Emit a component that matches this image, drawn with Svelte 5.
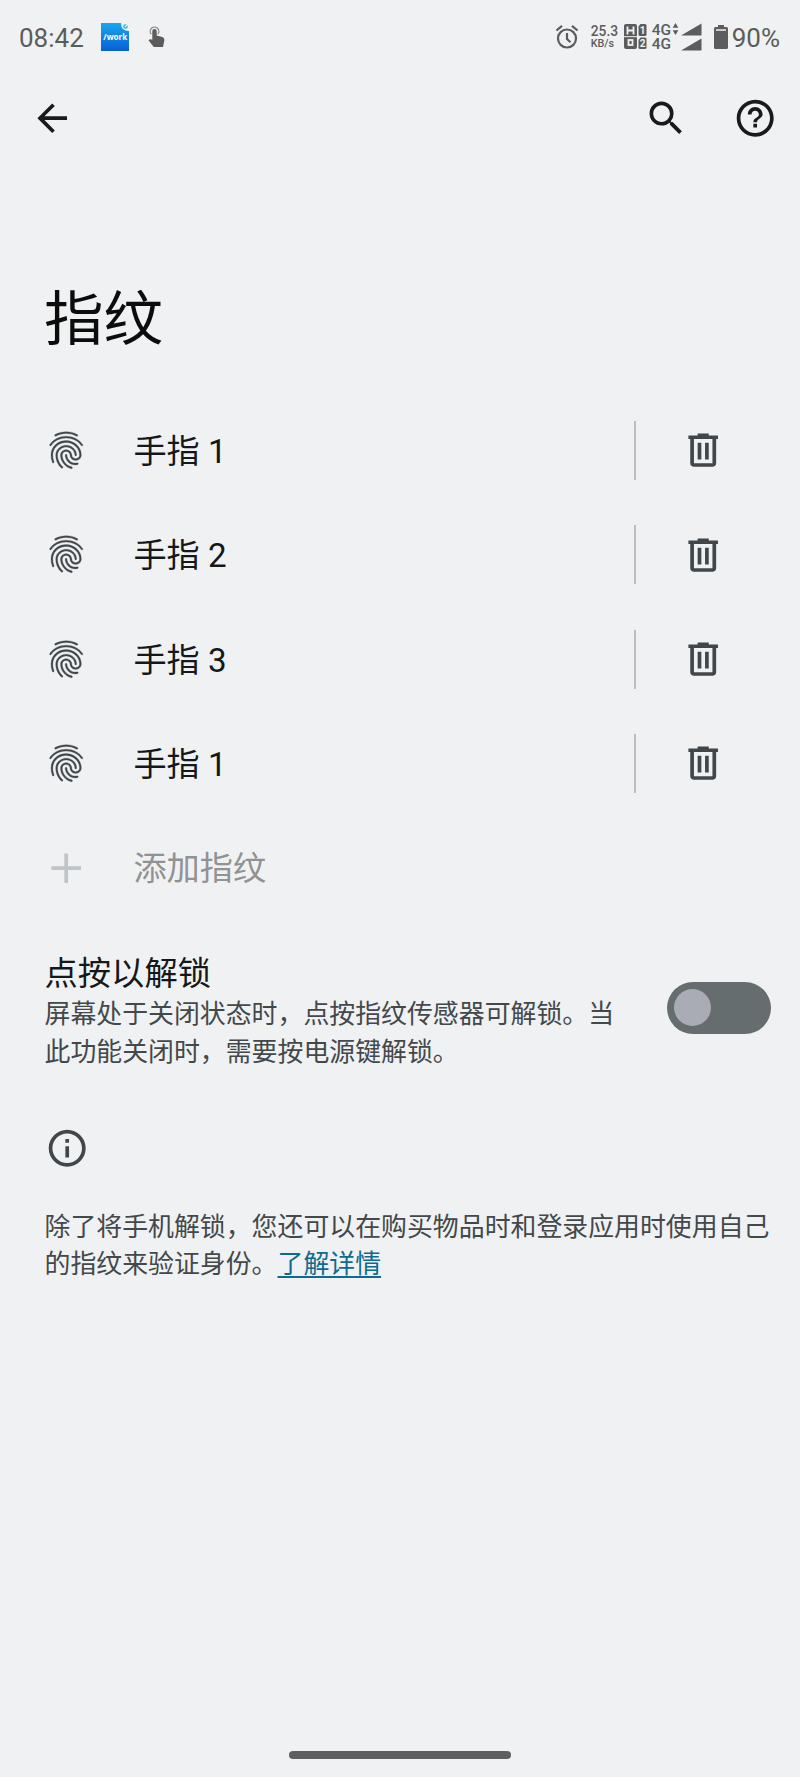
<script>
	let fingers = $state(['手指 1', '手指 2', '手指 3', '手指 1']);
	let tapToUnlock = $state(false);

	function remove(index) {
		fingers.splice(index, 1);
	}
</script>

<div class="screen">
	<div class="status">
		<span class="time">08:42</span>
		<svg class="app" width="30" height="30" viewBox="0 0 30 30">
			<defs>
				<linearGradient id="app-blue" x1="0" y1="0" x2="0" y2="1">
					<stop offset="0" stop-color="#1ba6ee" />
					<stop offset="1" stop-color="#075fd8" />
				</linearGradient>
			</defs>
			<path d="M1 1H21Q21 9 29 9V29H1Z" fill="url(#app-blue)" />
			<circle cx="25.5" cy="4.5" r="2.3" fill="#35b5d8" />
			<path d="M25 5L28 2" stroke="#f1f1f1" stroke-width="1.2" />
			<text x="15.3" y="18.2" text-anchor="middle" textLength="24" lengthAdjust="spacingAndGlyphs">/work</text>
		</svg>
		<svg class="touch" width="18" height="22" viewBox="0 0 18 22">
			<path d="M3.2 8.2A4.300 4.300 0 1 1 9.800 8.200" fill="none" stroke="#888" stroke-width="1.3" />
			<path
				d="M4.300 5.200a2.200 2.200 0 0 1 4.400 0V9.600L14.200 11Q16.700 11.900 16.300 14.800L15 21H5.800L.6 14.600Q1.400 12.400 4.300 13.700Z"
				fill="#5c5c5c"
			/>
		</svg>

		<div class="right">
			<svg class="alarm" width="24" height="26" viewBox="0 0 24 26">
				<circle cx="12" cy="14.500" r="9" />
				<path d="M12 9V15L15.500 18.200M1.500 6.500L7 1.800M22.500 6.500L17 1.800" />
			</svg>
			<div class="speed">
				<span>25.3</span>
				<small>KB/s</small>
			</div>
			<svg class="hd" width="24" height="26" viewBox="0 0 24 26">
				<rect x="0" y="0" width="13" height="25" rx="2" />
				<path d="M14.500 2.500L16.500 0H21Q22.500 0 22.500 1.500V10.500Q22.500 12 21 12H16Q14.500 12 14.500 10.500Z" />
				<path d="M14.500 16L16.500 13.500H21Q22.500 13.500 22.500 15V23.500Q22.500 25 21 25H16Q14.500 25 14.500 23.500Z" />
				<path class="line" d="M3.500 2.500V10.500M9.500 2.500V10.500M3.500 6.500H9.500" />
				<path class="gap" d="M0 12.700H13" />
				<rect class="line" x="4.500" y="16" width="4" height="5" />
				<text x="18.600" y="9.800">1</text>
				<text x="18.600" y="23">2</text>
			</svg>
			<div class="net">
				<span>4G</span>
				<span>4G</span>
			</div>
			<svg class="signal" width="30" height="28" viewBox="0 0 30 28">
				<path d="M3.500 0L6.300 4.800H.7ZM3.500 12L.7 7.200H6.300Z" />
				<path d="M9 12.500L29.500 .500V12.500ZM9 27.500L29.500 15.500V27.500Z" />
			</svg>
			<svg class="battery" width="14" height="24" viewBox="0 0 14 24">
				<path d="M4 0H10V2H12.500Q14 2 14 3.500V22.500Q14 24 12.500 24H1.500Q0 24 0 22.500V3.500Q0 2 1.500 2H4Z" />
				<path d="M2 5H12" stroke="#f1f1f1" stroke-width="1.500" />
			</svg>
			<span class="percent">90%</span>
		</div>
	</div>

	<header>
		<button aria-label="返回">
			<svg class="icon" viewBox="0 0 24 24">
				<path d="M7.825 13 13.425 18.600 12 20 4 12 12 4 13.425 5.400 7.825 11H20V13Z" />
			</svg>
		</button>
		<div class="actions">
			<button aria-label="搜索">
				<svg class="icon" viewBox="0 0 24 24">
					<path
						d="M15.500 14h-.79l-.28-.27A6.471 6.471 0 0 0 16 9.500 6.500 6.500 0 1 0 9.500 16c1.610 0 3.090-.59 4.230-1.570l.27.28v.79l5 4.990L20.490 19l-4.990-5zm-6 0C7.010 14 5 11.990 5 9.500S7.010 5 9.500 5 14 7.010 14 9.500 11.990 14 9.500 14z"
					/>
				</svg>
			</button>
			<button aria-label="帮助">
				<svg class="icon" viewBox="0 0 24 24">
					<path
						d="M11 17h2v-2h-2v2zm1-15C6.480 2 2 6.480 2 12s4.480 10 10 10 10-4.480 10-10S17.520 2 12 2zm0 18c-4.410 0-8-3.590-8-8s3.590-8 8-8 8 3.590 8 8-3.590 8-8 8zm0-14c-2.210 0-4 1.790-4 4h2c0-1.100.9-2 2-2s2 .9 2 2c0 2-3 1.500-3 4.200h2c0-2 3-2.200 3-4.200 0-2.210-1.790-4-4-4z"
					/>
				</svg>
			</button>
		</div>
	</header>

	<h1>指纹</h1>

	<ul>
		{#each fingers as finger, i}
			<li>
				<svg class="icon print" viewBox="0 0 24 24">
					<path
						d="M17.81 4.47c-.08 0-.16-.02-.23-.06C15.66 3.42 14 3 12.01 3c-1.98 0-3.86.47-5.57 1.41-.24.13-.54.04-.68-.2-.13-.24-.04-.55.2-.68C7.82 2.52 9.86 2 12.01 2c2.13 0 3.99.47 6.03 1.52.25.13.34.43.21.67-.09.18-.26.28-.44.28zM3.5 9.72c-.1 0-.2-.03-.29-.09-.23-.16-.28-.47-.12-.7.99-1.4 2.25-2.5 3.75-3.27C9.98 4.04 14 4.03 17.15 5.65c1.5.77 2.76 1.86 3.75 3.25.16.22.11.54-.12.7-.23.16-.54.11-.7-.12-.9-1.26-2.04-2.25-3.39-2.94-2.87-1.47-6.54-1.47-9.4.01-1.36.7-2.5 1.7-3.4 2.96-.08.14-.23.21-.39.21zm6.25 12.07c-.13 0-.26-.05-.35-.15-.87-.87-1.34-1.43-2.01-2.64-.69-1.23-1.05-2.73-1.05-4.34 0-2.97 2.54-5.39 5.66-5.39s5.66 2.42 5.66 5.39c0 .28-.22.5-.5.5s-.5-.22-.5-.5c0-2.42-2.09-4.39-4.66-4.39-2.57 0-4.66 1.97-4.66 4.39 0 1.44.32 2.77.93 3.85.64 1.15 1.08 1.64 1.85 2.42.19.2.19.51 0 .71-.11.1-.24.15-.37.15zm7.17-1.85c-1.19 0-2.24-.3-3.1-.89-1.49-1.01-2.38-2.65-2.38-4.39 0-.28.22-.5.5-.5s.5.22.5.5c0 1.41.72 2.74 1.94 3.56.71.48 1.54.71 2.54.71.24 0 .64-.03 1.04-.1.27-.05.53.13.58.41.05.27-.13.53-.41.58-.57.11-1.07.12-1.21.12zM14.91 22c-.04 0-.09-.01-.13-.02-1.59-.44-2.63-1.03-3.72-2.1-1.4-1.39-2.17-3.24-2.17-5.22 0-1.62 1.38-2.94 3.08-2.94 1.7 0 3.08 1.32 3.08 2.94 0 1.07.93 1.94 2.08 1.94s2.08-.87 2.08-1.94c0-3.77-3.25-6.83-7.25-6.83-2.84 0-5.44 1.58-6.61 4.03-.39.81-.59 1.76-.59 2.8 0 .78.07 2.01.67 3.61.1.26-.03.55-.29.64-.26.1-.55-.04-.64-.29-.49-1.31-.73-2.61-.73-3.96 0-1.2.23-2.29.68-3.24 1.33-2.79 4.28-4.6 7.51-4.6 4.55 0 8.25 3.51 8.25 7.83 0 1.62-1.38 2.94-3.08 2.94s-3.08-1.32-3.08-2.94c0-1.07-.93-1.94-2.08-1.94s-2.08.87-2.08 1.94c0 1.71.66 3.31 1.87 4.51.95.94 1.86 1.46 3.27 1.85.27.07.42.35.35.61-.05.23-.26.38-.47.38z"
					/>
				</svg>
				<span class="name">{finger}</span>
				<button class="delete" aria-label="删除" onclick={() => remove(i)}>
					<svg class="icon" viewBox="0 0 24 24">
						<path
							fill-rule="evenodd"
							d="M7 21Q6.175 21 5.588 20.413Q5 19.825 5 19V6H4V4H9V3H15V4H20V6H19V19Q19 19.825 18.413 20.413Q17.825 21 17 21ZM17 6H7V19H17ZM9 17H11V8H9ZM13 17H15V8H13Z"
						/>
					</svg>
				</button>
			</li>
		{/each}
		<li class="add">
			<svg class="icon" viewBox="0 0 24 24">
				<path d="M11 4H13V11H20V13H13V20H11V13H4V11H11Z" />
			</svg>
			<span class="name">添加指纹</span>
		</li>
	</ul>

	<section class="setting">
		<div class="text">
			<h2>点按以解锁</h2>
			<p>屏幕处于关闭状态时，点按指纹传感器可解锁。当此功能关闭时，需要按电源键解锁。</p>
		</div>
		<button
			class="switch"
			class:on={tapToUnlock}
			role="switch"
			aria-checked={tapToUnlock}
			aria-label="点按以解锁"
			onclick={() => (tapToUnlock = !tapToUnlock)}
		>
			<span class="thumb"></span>
		</button>
	</section>

	<footer>
		<svg class="icon" viewBox="0 0 24 24">
			<path
				d="M11 7h2v2h-2zm0 4h2v6h-2zm1-9C6.480 2 2 6.480 2 12s4.480 10 10 10 10-4.480 10-10S17.520 2 12 2zm0 18c-4.410 0-8-3.590-8-8s3.590-8 8-8 8 3.590 8 8-3.590 8-8 8z"
			/>
		</svg>
		<p>除了将手机解锁，您还可以在购买物品时和登录应用时使用自己的指纹来验证身份。<a href="#more">了解详情</a></p>
	</footer>

	<div class="home"></div>
</div>

<style>
	:global(body) {
		background: #f0f1f2;
	}
	.screen {
		box-sizing: border-box;
		width: 800px;
		height: 1777px;
		display: flex;
		flex-direction: column;
		background: #f0f1f2;
		color: #14181a;
		font-family: Roboto, 'Noto Sans CJK SC', sans-serif;
		overflow: hidden;
	}
	button {
		padding: 0;
		border: none;
		background: none;
		color: inherit;
	}
	svg {
		display: block;
		flex: none;
	}
	.icon {
		width: 44.4px;
		height: 44.4px;
		fill: currentColor;
	}

	.status {
		height: 74px;
		display: flex;
		align-items: center;
		padding: 0 20px 0 19px;
		color: #5c5c5c;
		font-size: 26px;
	}
	.time,
	.percent {
		padding-top: 1px;
	}
	.app {
		margin-left: 16px;
	}
	.app text {
		font: bold 9px 'Open Sans', sans-serif;
		fill: #fff;
	}
	.touch {
		margin-left: 18px;
	}
	.right {
		margin-left: auto;
		display: flex;
		align-items: center;
	}
	.alarm {
		fill: none;
		stroke: #5c5c5c;
		stroke-width: 2.2;
	}
	.speed {
		display: flex;
		flex-direction: column;
		margin-left: 12px;
		width: 27px;
		font-weight: 500;
		font-size: 13.8px;
		line-height: 13px;
	}
	.speed small {
		font-size: 10.8px;
		line-height: 12px;
	}
	.hd {
		margin-left: 6px;
		fill: #5c5c5c;
	}
	.hd .line {
		fill: none;
		stroke: #f1f1f1;
		stroke-width: 1.8;
	}
	.hd .gap {
		stroke: #f1f1f1;
		stroke-width: 1;
	}
	.hd text {
		font: bold 10px Roboto, sans-serif;
		fill: #f1f1f1;
		text-anchor: middle;
	}
	.net {
		display: flex;
		flex-direction: column;
		margin-left: 4px;
		width: 20px;
		font-weight: 500;
		font-size: 15.5px;
		line-height: 14.5px;
	}
	.signal {
		fill: #5c5c5c;
	}
	.battery {
		margin: 0 4px 0 12px;
		fill: #5c5c5c;
	}

	header {
		height: 89px;
		display: flex;
		align-items: center;
		justify-content: space-between;
		padding: 0 23px 0 29.5px;
		color: #1a1a1a;
	}
	.actions {
		display: flex;
		gap: 44.5px;
	}

	h1 {
		margin: 112px 0 0 44px;
		height: 123.5px;
		font-size: 59.5px;
		font-weight: 400;
		line-height: 90px;
		color: #0c0c0c;
	}

	ul {
		margin: 0;
		padding: 0;
		list-style: none;
	}
	li {
		height: 104.3px;
		display: flex;
		align-items: center;
		padding-left: 44px;
		color: #40464a;
	}
	.print {
		margin-top: -1px;
		stroke: currentColor;
		stroke-width: 0.15;
	}
	.name {
		flex: 1;
		margin: -4px 0 0 45px;
		font-size: 33.2px;
		color: #14181a;
	}
	.delete {
		height: 59px;
		margin-right: 75px;
		padding-left: 44.5px;
		border-left: 2px solid #bbbcc4;
	}
	.add {
		color: #bfc4c8;
	}
	.add .name {
		color: #919293;
	}

	.setting {
		display: flex;
		justify-content: space-between;
		margin-top: 34px;
		padding: 0 29.5px 0 44.5px;
	}
	.text {
		width: 580px;
	}
	h2 {
		margin: 0;
		font-size: 33.3px;
		font-weight: 400;
		line-height: 39px;
	}
	p {
		margin: 0;
		font-size: 25.9px;
		line-height: 37.6px;
		color: #43484b;
	}
	.setting p {
		margin-top: 3px;
	}
	.switch {
		box-sizing: border-box;
		width: 104px;
		height: 52px;
		margin-top: 28px;
		padding: 0 7.5px;
		border-radius: 26px;
		background: #666d6f;
	}
	.switch.on {
		background: #00658b;
	}
	.thumb {
		display: block;
		width: 37px;
		height: 37px;
		border-radius: 50%;
		background: #a9acb4;
	}
	.on .thumb {
		margin-left: auto;
	}

	footer {
		margin: 55px 20px 0 44.5px;
		color: #40464a;
	}
	footer p {
		margin-top: 38px;
	}
	a {
		color: #0f6b8e;
		text-decoration-thickness: 2px;
		text-underline-offset: 3px;
	}

	.home {
		width: 222px;
		height: 8px;
		margin: auto auto 18px;
		border-radius: 4px;
		background: #5f5f5f;
	}
</style>
